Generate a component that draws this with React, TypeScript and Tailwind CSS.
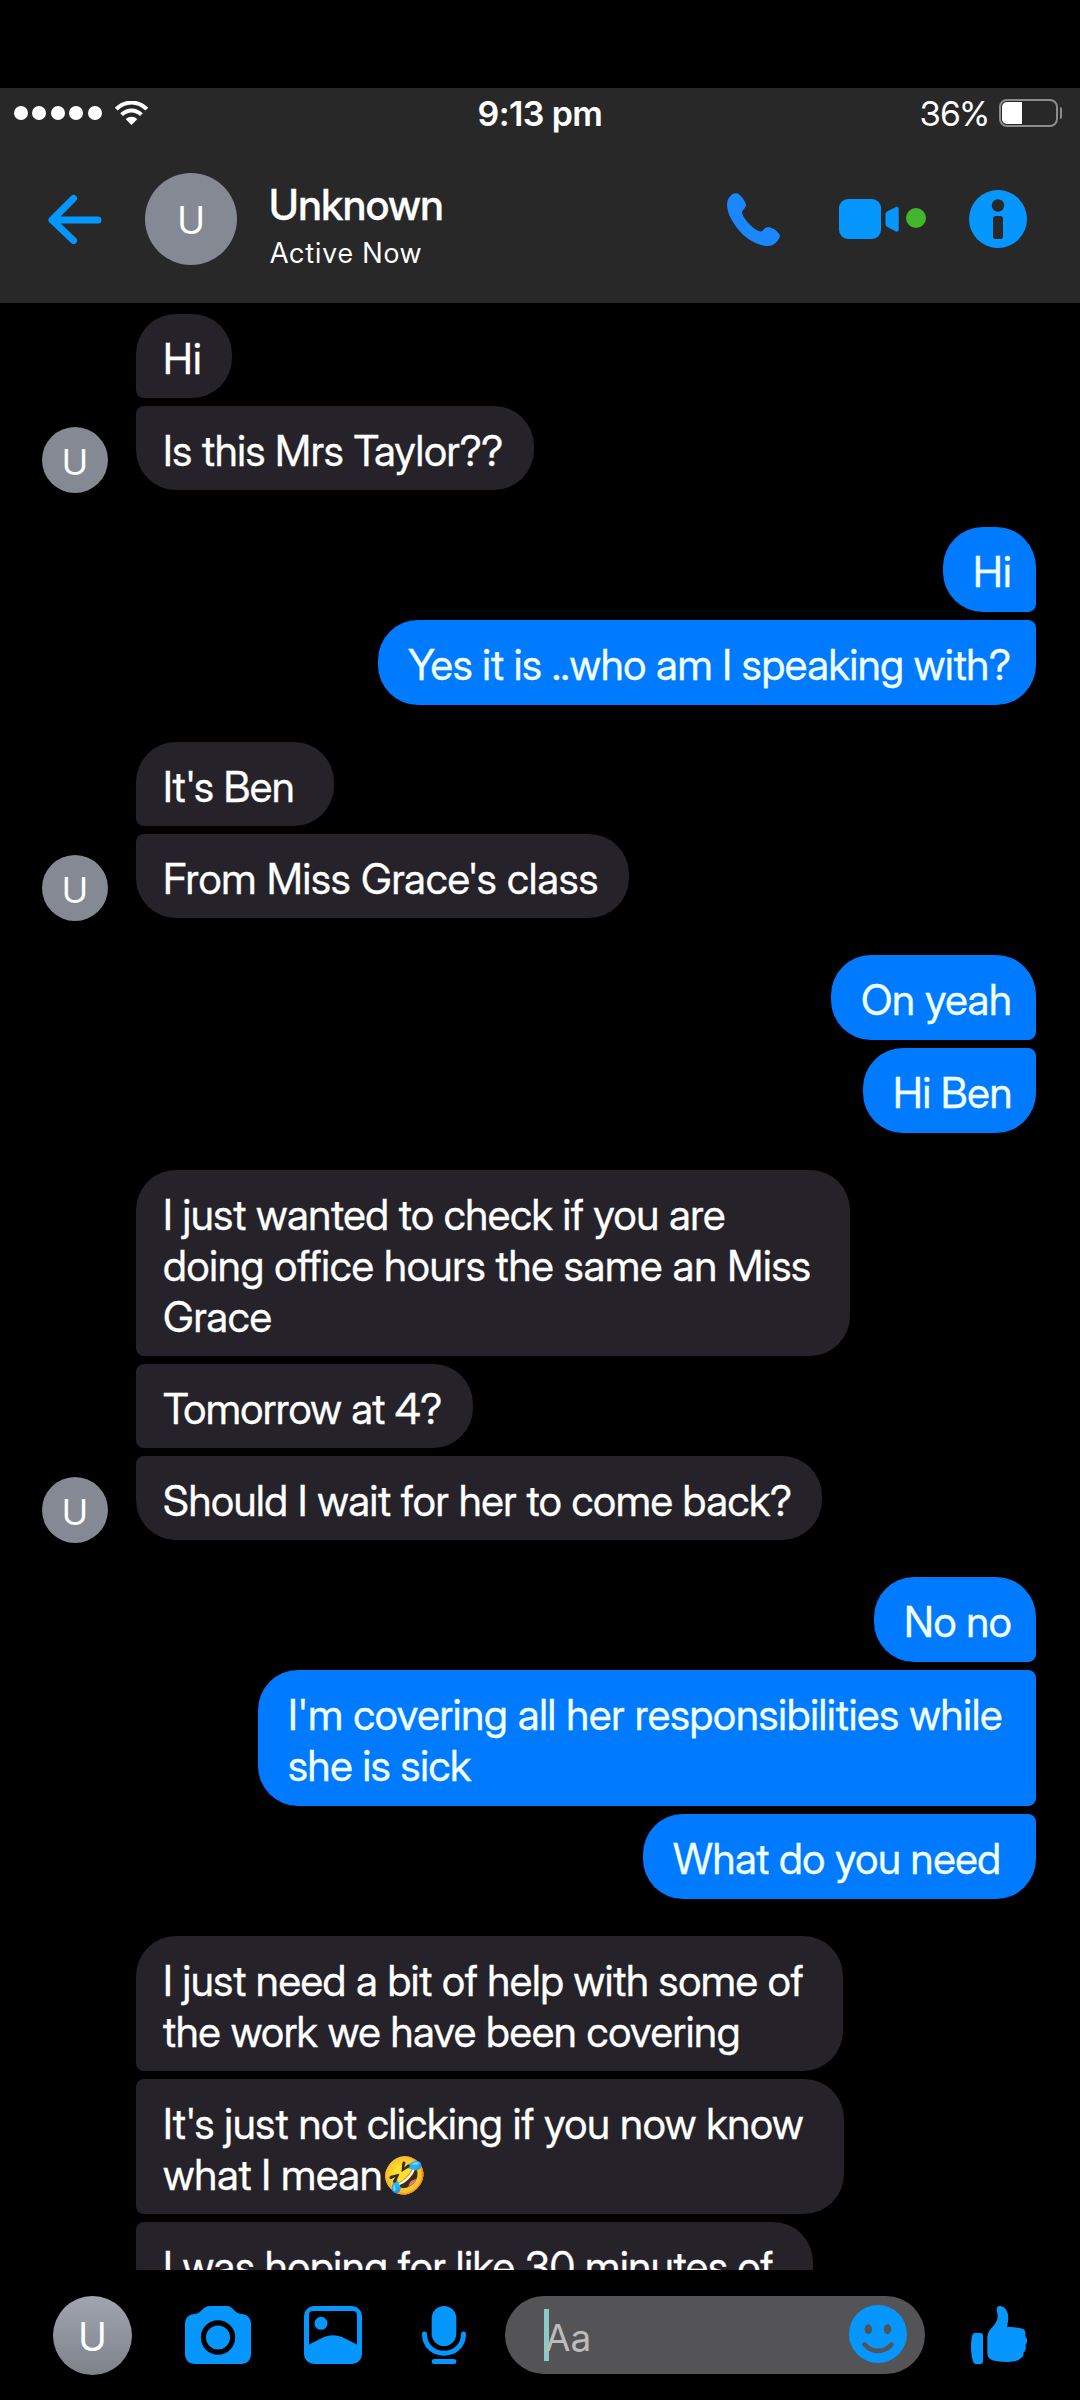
import React from "react";

type Line = { text: string; tracking: string };
type Message = { lines: Line[]; width: string; emoji?: string };
type Group = { from: "them" | "me"; avatar?: boolean; messages: Message[] };

const conversation: Group[] = [
  {
    from: "them",
    avatar: true,
    messages: [
      { lines: [{ text: "Hi", tracking: "tracking-[0.2px]" }], width: "w-[96px]" },
      { lines: [{ text: "Is this Mrs Taylor??", tracking: "tracking-[-0.4px]" }], width: "w-[398px]" },
    ],
  },
  {
    from: "me",
    messages: [
      { lines: [{ text: "Hi", tracking: "tracking-[0.2px]" }], width: "w-[93px]" },
      { lines: [{ text: "Yes it is ..who am I speaking with?", tracking: "tracking-[-0.38px]" }], width: "w-[658px]" },
    ],
  },
  {
    from: "them",
    avatar: true,
    messages: [
      { lines: [{ text: "It's Ben", tracking: "tracking-[-0.45px]" }], width: "w-[198px]" },
      { lines: [{ text: "From Miss Grace's class", tracking: "tracking-[-0.17px]" }], width: "w-[493px]" },
    ],
  },
  {
    from: "me",
    messages: [
      { lines: [{ text: "On yeah", tracking: "tracking-[-0.35px]" }], width: "w-[205px]" },
      { lines: [{ text: "Hi Ben", tracking: "tracking-[-0.35px]" }], width: "w-[173px]" },
    ],
  },
  {
    from: "them",
    avatar: true,
    messages: [
      {
        lines: [
          { text: "I just wanted to check if you are", tracking: "tracking-[-0.4px]" },
          { text: "doing office hours the same an Miss", tracking: "tracking-[-0.22px]" },
          { text: "Grace", tracking: "tracking-[-0.2px]" },
        ],
        width: "w-[714px]",
      },
      { lines: [{ text: "Tomorrow at 4?", tracking: "tracking-[-0.55px]" }], width: "w-[337px]" },
      { lines: [{ text: "Should I wait for her to come back?", tracking: "tracking-[-0.42px]" }], width: "w-[686px]" },
    ],
  },
  {
    from: "me",
    messages: [
      { lines: [{ text: "No no", tracking: "tracking-[-0.4px]" }], width: "w-[162px]" },
      {
        lines: [
          { text: "I'm covering all her responsibilities while", tracking: "tracking-[-0.25px]" },
          { text: "she is sick", tracking: "tracking-[-0.35px]" },
        ],
        width: "w-[778px]",
      },
      { lines: [{ text: "What do you need", tracking: "tracking-[-0.42px]" }], width: "w-[393px]" },
    ],
  },
  {
    from: "them",
    messages: [
      {
        lines: [
          { text: "I just need a bit of help with some of", tracking: "tracking-[-0.42px]" },
          { text: "the work we have been covering", tracking: "tracking-[-0.35px]" },
        ],
        width: "w-[707px]",
      },
      {
        lines: [
          { text: "It's just not clicking if you now know", tracking: "tracking-[-0.28px]" },
          { text: "what I mean", tracking: "tracking-[-0.3px]" },
        ],
        width: "w-[708px]",
        emoji: "🤣",
      },
      { lines: [{ text: "I was hoping for like 30 minutes of", tracking: "tracking-[-0.36px]" }], width: "w-[677px]" },
    ],
  },
];

function corners(from: "them" | "me", index: number, count: number) {
  const first = index === 0;
  const last = index === count - 1;
  if (from === "them") {
    if (first) return "rounded-[40px] rounded-bl-[8px]";
    return last ? "rounded-[40px] rounded-tl-[8px]" : "rounded-[40px] rounded-l-[8px]";
  }
  if (first) return "rounded-[40px] rounded-br-[8px]";
  return last ? "rounded-[40px] rounded-tr-[8px]" : "rounded-[40px] rounded-r-[8px]";
}

function Bubble({ message, from, shape }: { message: Message; from: "them" | "me"; shape: string }) {
  const tone =
    from === "them"
      ? "bg-[#252329] pl-[27px] pb-[14px] text-white"
      : "bg-[#007bff] pl-[30px] pb-[15px] text-[#f0ffff]";
  const last = message.lines.length - 1;
  return (
    <div
      className={`${tone} ${shape} ${message.width} pt-[19px] text-[42px] leading-[51px] whitespace-nowrap [-webkit-text-stroke:0.3px_currentColor]`}
    >
      {message.lines.map((line, i) => (
        <div key={line.text} className={`h-[51px] ${line.tracking}`}>
          {line.text}
          {i === last && message.emoji && (
            <span className="inline-block -translate-y-[2px] text-[36px] leading-none">{message.emoji}</span>
          )}
        </div>
      ))}
    </div>
  );
}

function MessageGroup({ group }: { group: Group }) {
  const mine = group.from === "me";
  return (
    <div className={mine ? "flex justify-end pr-[44px]" : "flex items-end pl-[42px]"}>
      {!mine && (
        <div className="mr-[28px] w-[66px] shrink-0">
          {group.avatar && (
            <div className="-mb-[3px] flex h-[66px] items-center justify-center rounded-full bg-[#858993] pt-[3px] text-[36px] leading-none text-white">
              U
            </div>
          )}
        </div>
      )}
      <div className={mine ? "flex flex-col items-end gap-2" : "flex flex-col items-start gap-2"}>
        {group.messages.map((m, i) => (
          <Bubble key={i} message={m} from={group.from} shape={corners(group.from, i, group.messages.length)} />
        ))}
      </div>
    </div>
  );
}

function StatusBar() {
  return (
    <div className="grid h-[50px] grid-cols-3 items-center text-[34px] leading-none text-white">
      <div className="flex items-center pl-[14px]">
        <div className="flex gap-[4.4px]">
          {[0, 1, 2, 3, 4].map((i) => (
            <span key={i} className="size-[14px] rounded-full bg-white" />
          ))}
        </div>
        <svg className="ml-[13px] h-[24px] w-[33px]" viewBox="0 0 33 24" fill="none" stroke="#fff">
          <path d="M1.200 8.200C9.800-.6 23.200-.6 31.800 8.200" strokeWidth="4" />
          <path d="M6.600 13.600C12.400 8 20.600 8 26.400 13.600" strokeWidth="4" />
          <path d="M10.800 18.200c3.400-3.200 8-3.200 11.400 0L16.500 24z" fill="#fff" stroke="none" />
        </svg>
      </div>
      <div className="pt-[2px] text-center font-[Inter] font-semibold tracking-[-0.6px]">9:13 pm</div>
      <div className="flex items-center justify-end pr-[18px]">
        <span className="pt-[2px]">36%</span>
        <span className="ml-[10px] flex h-[28px] w-[59px] rounded-[8px] border-2 border-[#8c8c8c] p-[1px]">
          <span className="w-[20px] rounded-l-[5px] bg-white" />
        </span>
        <span className="ml-[2px] h-[12px] w-[2px] rounded-r bg-[#8c8c8c]" />
      </div>
    </div>
  );
}

function Header() {
  return (
    <header className="h-[215px] shrink-0 bg-[#282828]">
      <StatusBar />
      <div className="flex h-[162px] items-center pl-[48px] text-white">
        <svg className="h-[50px] w-[54px]" viewBox="0 0 54 50" fill="none" stroke="#0597fe" strokeWidth="7" strokeLinecap="round" strokeLinejoin="round">
          <path d="M50 26H4M25.500 4.500L4 26L25.500 46.500" />
        </svg>
        <div className="ml-[43px] flex size-[92px] items-center justify-center rounded-full bg-[#858993] pt-[2px] text-[38px] leading-none">
          U
        </div>
        <div className="ml-[32px] flex flex-col pt-[10px]">
          <span className="text-[42px] leading-[51px] font-medium tracking-[-0.4px] [-webkit-text-stroke:0.3px_currentColor]">
            Unknown
          </span>
          <span className="ml-[1px] mt-[6px] text-[28px] leading-[34px] tracking-[1.4px]">Active Now</span>
        </div>
        <div className="ml-auto flex items-center pr-[53px]">
          <svg className="h-[53px] w-[53px]" viewBox="0 0 53 53" fill="#1b87fe">
            <path d="M3 3.500C6 .2 9.500-.8 12.500 1.800C15.300 4.300 18 8.200 18.900 11.200C19.700 14 16.500 15.800 15.300 18.300C14.600 19.800 15.400 21.600 16.600 23.800C19.800 29.300 25.500 35 31 37.800C33 38.800 34.600 38.900 36 37.200C37.500 35.300 39.800 33.700 42 34.100C45.600 34.800 49.500 37.600 51.800 40.400C54 43 52.500 45.500 50.300 48.300C47.500 52 43.500 53.300 39 52.900C29 52 17.500 44.800 10 35C3.500 26.500-.3 18 .1 10.800C.2 7.800 1.200 5.400 3 3.500Z" />
          </svg>
          <svg className="ml-[59px] h-[40px] w-[67px]" viewBox="0 0 67 40" fill="#0597fe">
            <rect width="42" height="40" rx="9" />
            <path d="M46.500 15.500C46.500 14 47.200 13 48.500 12.200L56.500 8.200C58.500 7.300 59.700 8 59.700 10V30.500C59.700 32.500 58.500 33.200 56.500 32.200L48.500 28C47.200 27.200 46.500 26.200 46.500 25Z" />
          </svg>
          <span className="size-[20px] -translate-y-px rounded-full bg-[#43b62c]" />
          <svg className="ml-[43px] size-[58px]" viewBox="0 0 58 58">
            <circle cx="29" cy="29" r="29" fill="#0597fe" />
            <circle cx="29" cy="15.500" r="6.200" fill="#282828" />
            <rect x="24" y="26" width="10" height="23" rx="2.500" fill="#282828" />
          </svg>
        </div>
      </div>
    </header>
  );
}

function Composer() {
  return (
    <footer className="flex h-[130px] shrink-0 items-center bg-black pl-[53px]">
      <div className="flex size-[79px] items-center justify-center rounded-full bg-linear-to-b from-[#a0a5b0] to-[#7e828b] pt-[2px] text-[39px] leading-none text-white">
        U
      </div>
      <svg className="ml-[53px] h-[58px] w-[66px]" viewBox="0 0 66 58">
        <path fill="#0597fe" d="M10 8C16 7.800 17.500 0 25 0H42C48 0 50 7.800 56 8C62 8 66 12 66 18V48C66 54 62 58 56 58H10C4 58 0 54 0 48V18C0 12 4 8 10 8Z" />
        <circle cx="33" cy="31.500" r="14.600" fill="#0597fe" stroke="#000" strokeWidth="5.200" />
      </svg>
      <svg className="ml-[53px] size-[58px]" viewBox="0 0 58 58">
        <rect width="58" height="58" rx="10" fill="#0597fe" />
        <path d="M5 9Q5 5 9 5H49Q53 5 53 9V38.500L38 31Q29 27.500 20 31L5 38.500Z" />
        <circle cx="17" cy="17.300" r="6.500" fill="#0597fe" />
      </svg>
      <svg className="ml-[60px] h-[58px] w-[44px]" viewBox="0 0 44 58" fill="#0597fe">
        <rect x="9.700" width="24.600" height="40" rx="12.300" />
        <path d="M2.500 28C2.500 53.500 41.500 53.500 41.500 28" fill="none" stroke="#0597fe" strokeWidth="5" strokeLinecap="round" />
        <rect x="9.700" y="53" width="24.600" height="5" rx="2.500" />
      </svg>
      <div className="relative ml-[39px] flex h-[78px] w-[420px] items-center justify-between rounded-full bg-[#545456] pr-[18px] pl-[40px]">
        <span className="absolute top-[13px] left-[39px] h-[52px] w-[5px] bg-[#8ccac5]" />
        <span className="relative pt-[4px] font-[Inter] text-[37px] leading-none text-[#bcbcbc]">Aa</span>
        <svg className="-mt-[2px] size-[58px]" viewBox="0 0 58 58">
          <circle cx="29" cy="29" r="29" fill="#0597fe" />
          <ellipse cx="19.300" cy="24.200" rx="3.700" ry="5" fill="#545456" />
          <ellipse cx="38.500" cy="24.200" rx="3.700" ry="5" fill="#545456" />
          <path d="M15.500 39.500C23 48 35 48 42.500 39.500" fill="none" stroke="#545456" strokeWidth="4.600" strokeLinecap="round" />
        </svg>
      </div>
      <svg className="ml-[46px] h-[58px] w-[56px]" viewBox="0 0 56 58" fill="#0597fe">
        <path d="M3.500 27H9.500Q12 27 12 30V55Q12 58 9.500 58H5Q2.500 58 1.800 55Q-1.600 42 1.200 29.500Q1.800 27 3.500 27Z" />
        <path d="M25.800 2.500C26 .8 27.500-.2 29.500 0C34.500.7 37.300 6 37.300 11.500C37.300 15 36.400 18 36.200 21.200C41 20.900 48 21.500 51.500 22.800C54.500 24 55.200 27.500 54 30C56.700 32.500 56.800 37 54.300 39.300C55.500 42 54.500 45 52.500 46.600C53 49.500 51.500 51.500 49.500 52.300C47 55.500 42 56 36 56C30.500 56 25.500 55.600 21.500 54.300C18 53 16.300 50.500 16.300 47V32C16.300 27 18.500 24.500 21 21.500C24 18 26.500 15 26.700 11C26.800 8 25.500 5 25.800 2.500Z" />
      </svg>
    </footer>
  );
}

export default function App() {
  return (
    <div className="flex h-[2400px] w-[1080px] flex-col overflow-hidden bg-black pt-[88px] font-['Inter_Display',Inter,sans-serif]">
      <Header />
      <main className="flex min-h-0 flex-1 flex-col gap-[37px] overflow-hidden pt-[11px]">
        {conversation.map((group, i) => (
          <MessageGroup key={i} group={group} />
        ))}
      </main>
      <Composer />
    </div>
  );
}
